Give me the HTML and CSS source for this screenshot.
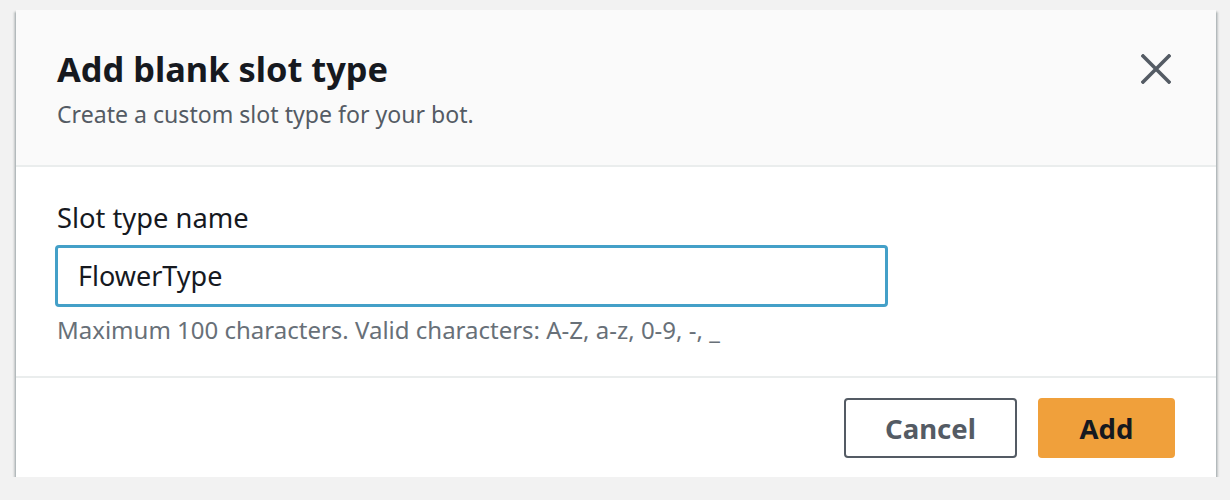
FILE: index.html
```html
<!DOCTYPE html>
<html>
<head>
<meta charset="utf-8">
<link rel="stylesheet" href="styles.css">
</head>
<body>
<div class="modal">
  <div class="modal-header">
    <div class="header-text">
      <h2 class="title">Add blank slot type</h2>
      <p class="subtitle">Create a custom slot type for your bot.</p>
    </div>
    <button class="close" aria-label="Close">
      <svg width="30" height="30" viewBox="0 0 30 30"><path d="M2 2 L28 28 M28 2 L2 28" stroke="#545b64" stroke-width="3.6" fill="none" stroke-linecap="square"/></svg>
    </button>
  </div>
  <div class="modal-body">
    <label class="label">Slot type name</label>
    <div class="input">FlowerType</div>
    <p class="hint">Maximum 100 characters. Valid characters: A-Z, a-z, 0-9, -, _</p>
  </div>
  <div class="modal-footer">
    <button class="btn btn-normal">Cancel</button>
    <button class="btn btn-primary">Add</button>
  </div>
</div>
</body>
</html>
```

FILE: styles.css
```css
html, body {
  margin: 0;
  padding: 0;
  background: #f2f2f2;
  font-family: "Noto Sans", "Open Sans", sans-serif;
  color: #16191f;
}
body {
  padding: 10px 14px 0 16px;
}
.modal {
  width: 1200px;
  background: #fff;
  box-shadow: 0 2px 2px 0 rgba(0, 28, 36, 0.35), 2px 2px 2px 0 rgba(0, 28, 36, 0.18), -2px 2px 2px 0 rgba(0, 28, 36, 0.18);
}
.modal-header {
  background: #fafafa;
  border-bottom: 2px solid #eaeded;
  padding: 37px 40px 31px 41px;
  display: flex;
  justify-content: space-between;
  align-items: flex-start;
}
.title {
  margin: 0;
  font-size: 34.4px;
  line-height: 44px;
  font-weight: 700;
  color: #16191f;
}
.subtitle {
  margin: 3px 0 0;
  font-size: 23.1px;
  line-height: 40px;
  color: #545b64;
}
.close {
  border: 0;
  background: transparent;
  padding: 0;
  margin: 7px 5px 0 0;
  width: 30px;
  height: 30px;
  display: flex;
}
.modal-body {
  padding: 31px 40px 30px 41px;
  border-bottom: 2px solid #eaeded;
}
.label {
  display: block;
  font-size: 27.3px;
  line-height: 40px;
  color: #16191f;
}
.input {
  margin-top: 7px;
  width: 833px;
  height: 62px;
  box-sizing: border-box;
  border: 3px solid #44a0c8;
  border-radius: 4px;
  padding: 0 0 0 20px;
  font-size: 27px;
  line-height: 56px;
  color: #16191f;
  margin-left: -2px;
}
.hint {
  margin: 7px 0 0;
  font-size: 24px;
  line-height: 32px;
  color: #687078;
}
.modal-footer {
  padding: 20px 41px 19px;
  display: flex;
  justify-content: flex-end;
  gap: 21px;
}
.btn {
  height: 60px;
  box-sizing: border-box;
  border-radius: 4px;
  font-family: inherit;
  font-size: 27.5px;
  font-weight: 700;
  padding: 0;
  cursor: pointer;
}
.btn-normal {
  width: 173px;
  background: #fff;
  border: 2px solid #545b64;
  color: #545b64;
}
.btn-primary {
  width: 137px;
  background: #f0a03b;
  border: 2px solid #f0a03b;
  color: #16191f;
}
```
